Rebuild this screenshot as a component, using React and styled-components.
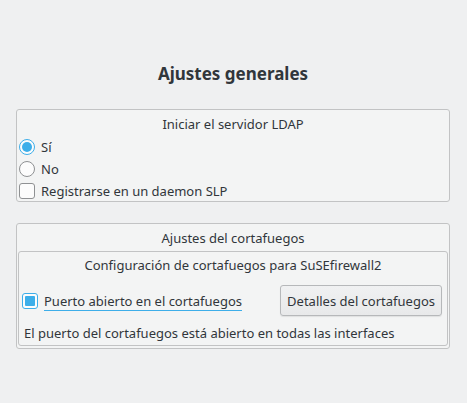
import React from 'react';
import styled, { createGlobalStyle } from 'styled-components';

const GlobalStyle = createGlobalStyle`
  html, body {
    margin: 0;
    padding: 0;
    background: #eff0f1;
  }
  body {
    font-family: "Noto Sans", "DejaVu Sans", sans-serif;
    font-size: 13px;
    color: #31363b;
  }
`;

const Page = styled.div`
  width: 467px;
  height: 403px;
  box-sizing: border-box;
  padding: 0 17px 0 16px;
  display: flex;
  flex-direction: column;
`;

const Heading = styled.h1`
  margin: 0;
  padding-top: 61px;
  height: 48px;
  box-sizing: content-box;
  font-size: 17px;
  font-weight: bold;
  line-height: 26px;
  text-align: center;
`;

const Group = styled.fieldset`
  margin: 0 0 ${p => p.$gap || 0}px 0;
  padding: ${p => p.$pad || '0 2px 0 2px'};
  border: 1px solid #c2c3c4;
  border-radius: 3px;
  background: #f3f4f4;
  display: flex;
  flex-direction: column;
  min-width: 0;
`;

const GroupTitle = styled.div`
  text-align: center;
  line-height: 18px;
  padding: ${p => p.$pad || '5px 0 3px'};
`;

const Row = styled.label`
  display: flex;
  align-items: center;
  gap: 6px;
  height: ${p => p.$h || 22}px;
`;

const Radio = styled.span`
  width: 16px;
  height: 16px;
  box-sizing: border-box;
  border-radius: 50%;
  border: 1px solid ${p => (p.$on ? '#3daee9' : '#8f9193')};
  background: #fcfcfc;
  display: flex;
  align-items: center;
  justify-content: center;
  &::after {
    content: '';
    display: ${p => (p.$on ? 'block' : 'none')};
    width: 10px;
    height: 10px;
    border-radius: 50%;
    background: #3daee9;
  }
`;

const Check = styled.span`
  width: 16px;
  height: 16px;
  box-sizing: border-box;
  border-radius: 3px;
  border: 1px solid ${p => (p.$on ? '#3daee9' : '#8f9193')};
  background: #fcfcfc;
  display: flex;
  align-items: center;
  justify-content: center;
  &::after {
    content: '';
    display: ${p => (p.$on ? 'block' : 'none')};
    width: 10px;
    height: 10px;
    border-radius: 1px;
    background: #3daee9;
  }
`;

const FocusLabel = styled.span`
  border-bottom: 1px solid #3daee9;
  line-height: 18px;
  padding-top: 1px;
`;

const ActionRow = styled.div`
  display: flex;
  align-items: center;
  justify-content: space-between;
  padding: 8px 3px 8px 1px;
`;

const Button = styled.button`
  height: 31px;
  padding: 0 6px;
  font-family: inherit;
  font-size: 13px;
  color: #31363b;
  border: 1px solid #b6b8ba;
  border-radius: 3px;
  background: linear-gradient(#f0f1f2, #e8e9ea);
  box-shadow: 0 1px 1px rgba(0, 0, 0, 0.08);
`;

const Note = styled.div`
  padding: 0 0 3px 3px;
  line-height: 18px;
`;

export default function App() {
  return (
    <>
      <GlobalStyle />
      <Page>
        <Heading>Ajustes generales</Heading>
        <Group $gap={21}>
          <GroupTitle>Iniciar el servidor LDAP</GroupTitle>
          <Row><Radio $on /> Sí</Row>
          <Row><Radio /> No</Row>
          <Row $h={21}><Check /> Registrarse en un daemon SLP</Row>
        </Group>
        <Group $pad="0 1px 2px 1px">
          <GroupTitle $pad="5px 0 4px">Ajustes del cortafuegos</GroupTitle>
          <Group>
            <GroupTitle $pad="4px 0 3px">Configuración de cortafuegos para SuSEfirewall2</GroupTitle>
            <ActionRow>
              <Row as="div" $h={31}>
                <Check $on />
                <FocusLabel>Puerto abierto en el cortafuegos</FocusLabel>
              </Row>
              <Button>Detalles del cortafuegos</Button>
            </ActionRow>
            <Note>El puerto del cortafuegos está abierto en todas las interfaces</Note>
          </Group>
        </Group>
      </Page>
    </>
  );
}
